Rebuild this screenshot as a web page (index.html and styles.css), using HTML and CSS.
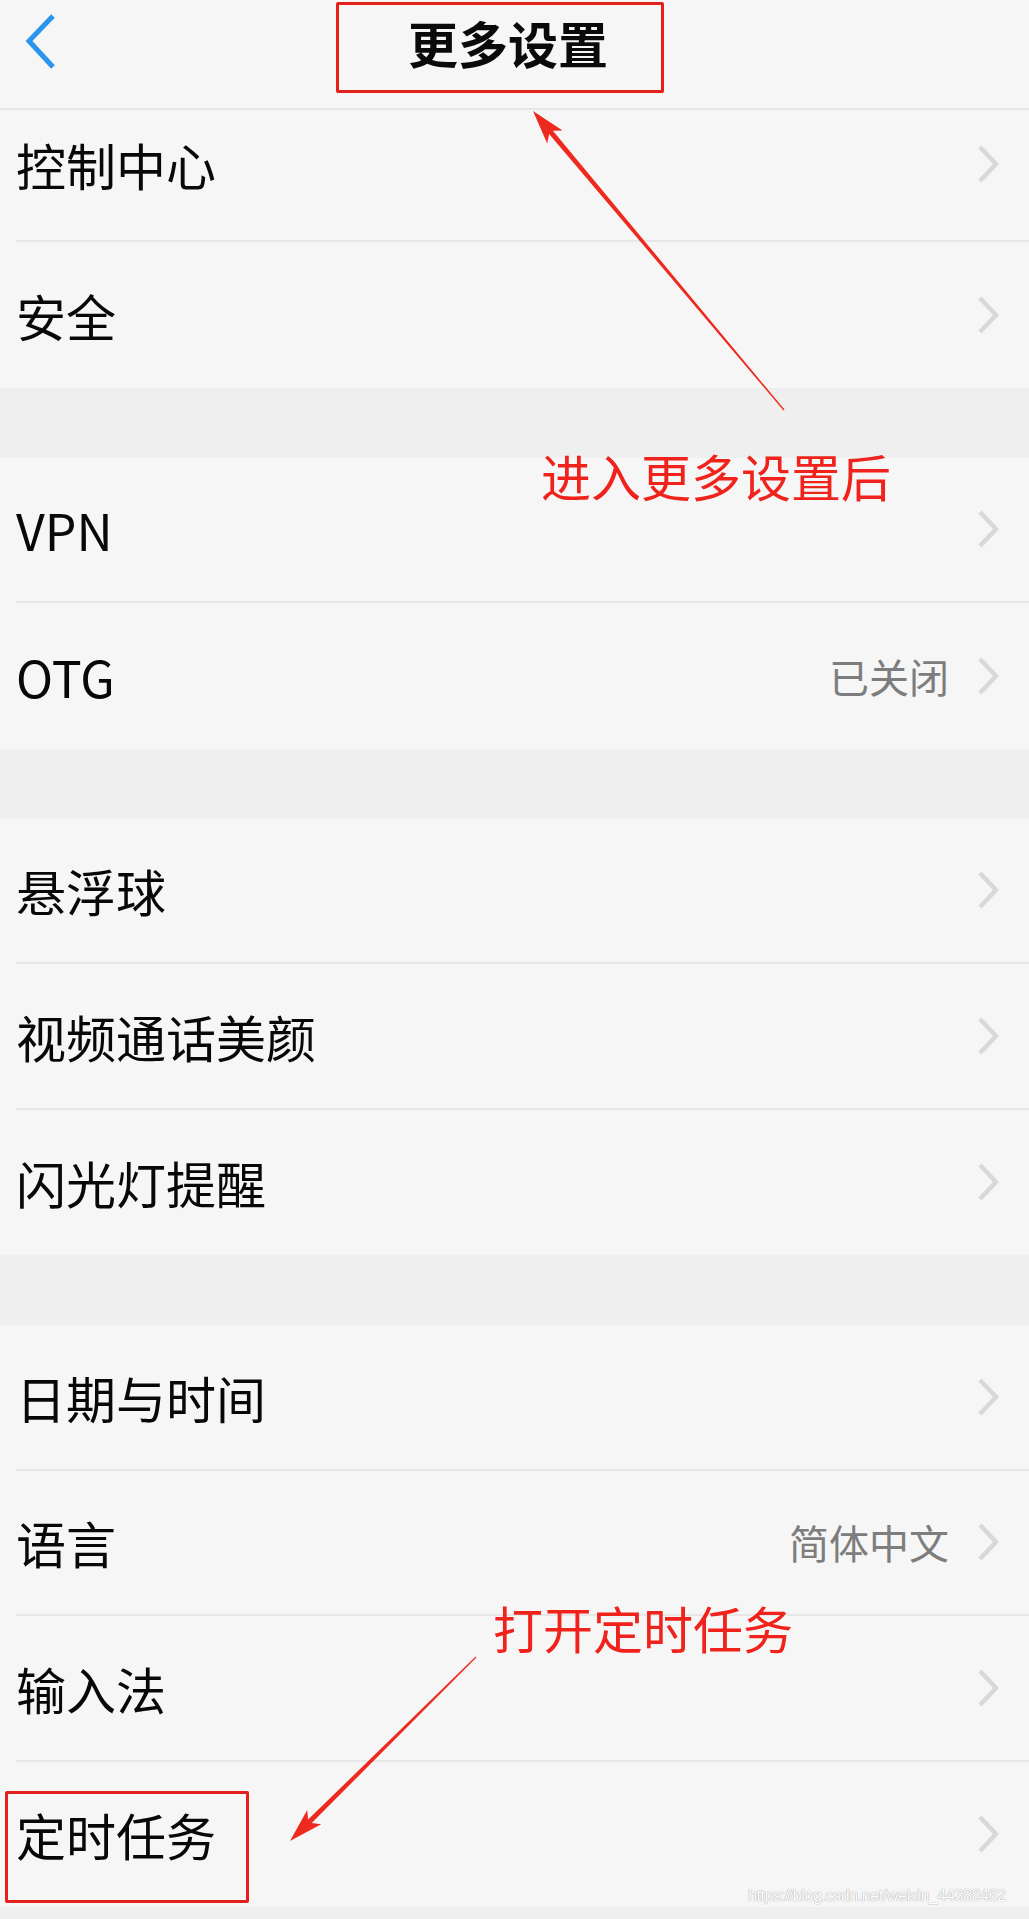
FILE: index.html
```html
<!DOCTYPE html>
<html lang="zh-CN">
<head>
<meta charset="utf-8">
<title>更多设置</title>
<link rel="stylesheet" href="styles.css">
</head>
<body>
<div class="page">
  <header class="topbar">
    <a class="back" href="#" aria-label="返回">
      <svg width="36" height="62" viewBox="0 0 36 62"><polyline points="31,5 7,30 31,56" fill="none" stroke="#2b95ee" stroke-width="5"/></svg>
    </a>
    <h1 class="title">更多设置</h1>
    <span></span>
  </header>

  <section class="group">
    <div class="row row-first"><span class="label">控制中心</span><svg class="chev" width="24" height="40" viewBox="0 0 24 40"><polyline points="3,3 19,20 3,37"/></svg></div>
    <div class="row"><span class="label">安全</span><svg class="chev" width="24" height="40" viewBox="0 0 24 40"><polyline points="3,3 19,20 3,37"/></svg></div>
  </section>

  <section class="group">
    <div class="row"><span class="label">VPN</span><svg class="chev" width="24" height="40" viewBox="0 0 24 40"><polyline points="3,3 19,20 3,37"/></svg></div>
    <div class="row"><span class="label">OTG</span><span class="value">已关闭</span><svg class="chev" width="24" height="40" viewBox="0 0 24 40"><polyline points="3,3 19,20 3,37"/></svg></div>
  </section>

  <section class="group">
    <div class="row"><span class="label">悬浮球</span><svg class="chev" width="24" height="40" viewBox="0 0 24 40"><polyline points="3,3 19,20 3,37"/></svg></div>
    <div class="row"><span class="label">视频通话美颜</span><svg class="chev" width="24" height="40" viewBox="0 0 24 40"><polyline points="3,3 19,20 3,37"/></svg></div>
    <div class="row"><span class="label">闪光灯提醒</span><svg class="chev" width="24" height="40" viewBox="0 0 24 40"><polyline points="3,3 19,20 3,37"/></svg></div>
  </section>

  <section class="group group-last">
    <div class="row"><span class="label">日期与时间</span><svg class="chev" width="24" height="40" viewBox="0 0 24 40"><polyline points="3,3 19,20 3,37"/></svg></div>
    <div class="row"><span class="label">语言</span><span class="value">简体中文</span><svg class="chev" width="24" height="40" viewBox="0 0 24 40"><polyline points="3,3 19,20 3,37"/></svg></div>
    <div class="row"><span class="label">输入法</span><svg class="chev" width="24" height="40" viewBox="0 0 24 40"><polyline points="3,3 19,20 3,37"/></svg></div>
    <div class="row"><span class="label">定时任务</span><svg class="chev" width="24" height="40" viewBox="0 0 24 40"><polyline points="3,3 19,20 3,37"/></svg></div>
  </section>

  <div class="annotations">
    <div class="mark mark-title"></div>
    <div class="mark mark-task"></div>
    <p class="note note-1">进入更多设置后</p>
    <p class="note note-2">打开定时任务</p>
    <svg class="arrows" width="1029" height="1919" viewBox="0 0 1029 1919">
      <polygon points="784.5,409.6 552.9,130.8 562.6,130.6 533,111 547.2,143.4 549.1,134.0 783.5,410.4"/>
      <polygon points="475.6,1656.6 308.1,1819.5 307.2,1810.0 290,1841 321.2,1824.2 311.7,1823.1 476.4,1657.4"/>
    </svg>
    <p class="watermark">https://blog.csdn.net/weixin_44388462</p>
  </div>
</div>
</body>
</html>
```

FILE: styles.css
```css
* {
  box-sizing: border-box;
  margin: 0;
  padding: 0;
}

html, body {
  background: #efefef;
}

body {
  width: 1029px;
  font-family: "Noto Sans CJK SC", "Noto Sans", sans-serif;
  color: #111;
}

.page {
  position: relative;
  min-height: 1919px;
}

.topbar {
  height: 110px;
  background: #f6f6f6;
  border-bottom: 2px solid #e6e6e6;
  display: grid;
  grid-template-columns: 1fr auto 1fr;
  align-items: center;
  padding-bottom: 24px;
}

.back {
  display: flex;
  margin-left: 22px;
  justify-self: start;
}

.title {
  font-size: 50px;
  line-height: 1;
  font-weight: 700;
  color: #0a0a0a;
  margin-right: 13px;
}

.group {
  background: #f6f6f6;
  margin-bottom: 70px;
}

.group-last {
  margin-bottom: 0;
}

.row {
  display: flex;
  align-items: center;
  height: 145.5px;
  margin-left: 16px;
  padding-right: 28px;
  border-bottom: 2px solid #e7e7e7;
}

.row:last-child {
  border-bottom: none;
}

.row-first {
  height: 132px;
  padding-bottom: 22px;
}

.label {
  flex: 1;
  font-size: 50px;
  line-height: 1;
  color: #080808;
}

.value {
  font-size: 40px;
  line-height: 1;
  color: #7d7d7d;
  margin-right: 28px;
}

.chev polyline {
  fill: none;
  stroke: #d8d8d8;
  stroke-width: 4.5;
}

.annotations {
  position: absolute;
  left: 0;
  top: 0;
  width: 1029px;
  height: 1919px;
  pointer-events: none;
}

.mark {
  position: absolute;
  border: 3px solid #e3201b;
  border-radius: 2px;
}

.mark-title {
  left: 336px;
  top: 2px;
  width: 328px;
  height: 91px;
}

.mark-task {
  left: 5px;
  top: 1791px;
  width: 244px;
  height: 112px;
}

.note {
  position: absolute;
  font-size: 50px;
  line-height: 1;
  color: #f0231c;
  white-space: nowrap;
}

.note-1 {
  left: 541px;
  top: 450px;
}

.note-2 {
  left: 493px;
  top: 1602px;
}

.arrows {
  position: absolute;
  left: 0;
  top: 0;
}

.arrows polygon {
  fill: #ee2a1f;
}

.watermark {
  position: absolute;
  left: 748px;
  top: 1887px;
  font-family: "Liberation Sans", sans-serif;
  font-size: 16px;
  letter-spacing: -0.4px;
  color: #ffffff;
  text-shadow: 0 0 1px #a8a8a8, 0 0 1px #a8a8a8;
  white-space: nowrap;
}
```
